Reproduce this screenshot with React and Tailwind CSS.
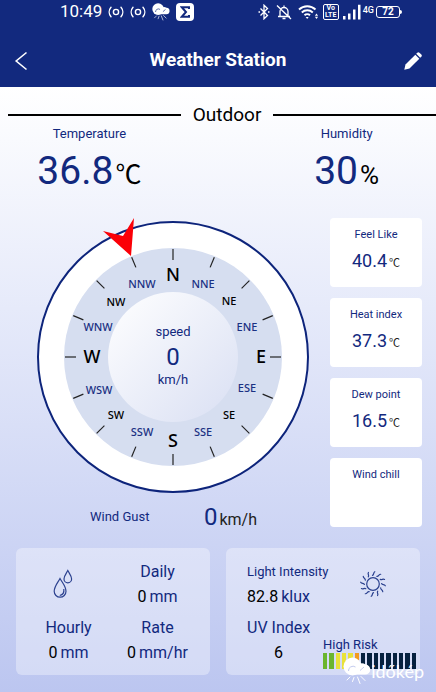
const directions = [
  { label: "N", x: 0, y: -82, kind: "main" },
  { label: "NNE", x: 30, y: -73, kind: "minor" },
  { label: "NE", x: 56, y: -56, kind: "mid" },
  { label: "ENE", x: 74, y: -30, kind: "minor" },
  { label: "E", x: 88, y: 0, kind: "main" },
  { label: "ESE", x: 74, y: 31, kind: "minor" },
  { label: "SE", x: 56, y: 58, kind: "mid" },
  { label: "SSE", x: 30, y: 75, kind: "minor" },
  { label: "S", x: 0, y: 84, kind: "main" },
  { label: "SSW", x: -31, y: 75, kind: "minor" },
  { label: "SW", x: -57, y: 58, kind: "mid" },
  { label: "WSW", x: -74, y: 33, kind: "minor" },
  { label: "W", x: -81, y: 0, kind: "main" },
  { label: "WNW", x: -75, y: -30, kind: "minor" },
  { label: "NW", x: -57, y: -55, kind: "mid" },
  { label: "NNW", x: -31, y: -73, kind: "minor" },
];

const labelStyles = {
  main: "fill-black text-[18px] font-medium",
  mid: "fill-black text-[11px] font-medium",
  minor: "fill-[#1b3183] text-[11px] font-medium",
};

const feelCards = [
  { title: "Feel Like", value: "40.4" },
  { title: "Heat index", value: "37.3" },
  { title: "Dew point", value: "16.5" },
  { title: "Wind chill", value: null },
];

const uvBars = [
  "bg-[#6ab52e]",
  "bg-[#6ab52e]",
  "bg-[#e9e23a]",
  "bg-[#e9e23a]",
  "bg-[#e9e23a]",
  "bg-[#f39a1e]",
  ...Array(9).fill("bg-[#06213f]"),
];

const CastIcon = () => (
  <svg viewBox="0 0 16 12" className="h-3 w-4" fill="none" stroke="white" strokeWidth="1.4">
    <circle cx="8" cy="6" r="2.6" />
    <path d="M3 1.2C.6 4 .6 8 3 10.8M13 1.2c2.4 2.8 2.4 6.8 0 9.6" strokeLinecap="round" />
  </svg>
);

const CloudSun = ({ className, line = "#c3cbee" }) => (
  <svg viewBox="0 0 28 28" className={className}>
    <circle cx="9.5" cy="9.5" r="9" fill="white" />
    <path
      d="M10 17.5h12a5 5 0 0 0 .6-10 6.500 6.500 0 0 0-10 3A3.800 3.800 0 0 0 10 17.500z"
      fill="white"
    />
    <path d="M5.500 14a4.500 4.500 0 0 1 7-4M17 13.500l4-3.500" stroke={line} strokeWidth="1" fill="none" />
    <path
      d="M7 20l-3 3M11 20.500l-1.500 4M14.500 20l2.500 6.500M18 19.500l4 4"
      stroke="white"
      strokeWidth="1"
      strokeLinecap="round"
    />
  </svg>
);

const StatusBar = () => (
  <div className="flex h-6 items-center justify-between pr-[34px] pl-[60px] text-white">
    <div className="flex items-center gap-1.5">
      <span className="text-[17px]">10:49</span>
      <CastIcon />
      <CastIcon />
      <CloudSun className="h-[18px] w-[18px]" line="#12297e" />
      <span className="flex h-[18px] w-[18px] items-center justify-center rounded-[4px] bg-white">
        <svg viewBox="0 0 10 12" className="h-3 w-2.5" fill="none" stroke="#12297e" strokeWidth="2">
          <path d="M9 3V1.200H1.800L6 6l-4.200 4.800H9V9" />
        </svg>
      </span>
    </div>
    <div className="flex items-center">
      <svg viewBox="0 0 12 16" className="h-4 w-3" fill="none" stroke="white" strokeWidth="1.300">
        <path d="M2.500 4.500l7 7L6 14.800V1.200l3.500 3.300-7 7M.5 8h1.500M10 8h1.500" />
      </svg>
      <svg viewBox="0 0 16 16" className="ml-1.5 h-4 w-4" fill="none" stroke="white" strokeWidth="1.300">
        <path d="M2 12.500h12M4 12.500V7.500a4 4 0 0 1 8 0v5M8 3.200V1.500M6.500 14.500h3M1 1.500l14 13.500" />
      </svg>
      <svg viewBox="0 0 21 16" className="ml-1.5 h-4 w-[21px]" fill="none" stroke="white" strokeWidth="1.900">
        <path d="M1 5.500a12 12 0 0 1 16.500 0M3.800 8.500a8 8 0 0 1 11 0M6.500 11.300a4 4 0 0 1 5.500 0" />
        <path d="M9.200 15l-1.500-2h3z" fill="white" stroke="none" />
        <path d="M18.500 9.500l1.600 2.200h-3.200zM18.500 15l1.600-2.200h-3.200z" fill="white" stroke="none" />
      </svg>
      <span className="ml-1 flex h-4 w-4 flex-col items-center justify-center rounded-[2px] border border-white text-[7px] leading-[7px] font-bold">
        <span>Vo</span>
        <span>LTE</span>
      </span>
      <svg viewBox="0 0 18 16" className="ml-1 h-4 w-[18px]" fill="white">
        <path d="M0 12h2.500v3.500H0zM5 9.500h2.500v6H5zM10 5.500h2.500v10H10zM15 .8h2.500v14.700H15z" />
      </svg>
      <span className="ml-0.5 self-start text-[9px] leading-[13px] font-medium">4G</span>
      <span className="ml-0.5 flex h-3 w-6 items-center justify-center rounded-[3px] border border-white text-[10px] leading-[10px] font-bold">
        72
      </span>
      <span className="h-1 w-0.5 rounded-r-sm bg-white" />
    </div>
  </div>
);

const Header = () => (
  <header className="bg-[#12297e]">
    <StatusBar />
    <div className="grid h-[63px] grid-cols-[1fr_auto_1fr] items-center px-3.5 pt-2.5 text-white">
      <button aria-label="Back" className="w-4">
        <svg viewBox="0 0 14 20" className="h-5 w-3.5" fill="none" stroke="white" strokeWidth="1.600">
          <path d="M12.500 1.500L2.200 10l10.300 8.500" />
        </svg>
      </button>
      <h1 className="text-[19px] font-bold">Weather Station</h1>
      <button aria-label="Edit" className="justify-self-end">
        <svg viewBox="0 0 18 18" className="h-[18px] w-[18px]" fill="white">
          <path d="M.3 17.700l1.200-5.200L11.300 2.700l4 4L5.500 16.500z" />
          <path d="M12.200 1.800l1.100-1.100a1.500 1.500 0 0 1 2.100 0l1.900 1.900a1.500 1.500 0 0 1 0 2.100l-1.100 1.100z" />
        </svg>
      </button>
    </div>
  </header>
);

const Reading = ({ title, value, unit }) => (
  <div className="flex w-[41%] flex-col items-center">
    <h3 className="text-[13px] leading-[14px]">{title}</h3>
    <p className="mt-1 flex items-baseline text-[39px] leading-[52px]">
      {value}
      <span className="ml-0.5 text-[26px] leading-none text-black">{unit}</span>
    </p>
  </div>
);

const Compass = () => (
  <svg viewBox="-136 -136 272 272" className="w-full overflow-visible">
    <defs>
      <linearGradient id="dial" x1="0" y1="0" x2="1" y2="1">
        <stop offset="0" stopColor="#ffffff" />
        <stop offset="1" stopColor="#d9dff3" />
      </linearGradient>
    </defs>
    <circle r="135" fill="white" stroke="#0d247b" strokeWidth="2" />
    <circle r="109" fill="#d6def0" />
    <circle r="65" fill="url(#dial)" />
    {directions.map(({ label, x, y, kind }, i) => (
      <g key={label}>
        <line y1="-108" y2="-97" stroke="#222" strokeWidth="1.200" transform={`rotate(${i * 22.5})`} />
        <text
          x={x}
          y={y}
          textAnchor="middle"
          dy="0.36em"
          className={`font-['Noto_Sans',sans-serif] ${labelStyles[kind]}`}
        >
          {label}
        </text>
      </g>
    ))}
    <g textAnchor="middle" className="fill-[#12297e]">
      <text y="-21" className="text-[13px]">speed</text>
      <text y="8" className="text-[24px]">0</text>
      <text y="27" className="text-[13px]">km/h</text>
    </g>
    <path d="M-42-101L-70-126l20 5 11-18z" fill="#fb0007" />
  </svg>
);

const FeelCard = ({ title, value }) => (
  <div className="h-[69px] rounded-[4px] bg-white pt-2 text-center">
    <h3 className="text-[11px] leading-[18px]">{title}</h3>
    {value && (
      <p className="mt-1 flex items-baseline justify-center text-[18px] leading-[26px]">
        {value}
        <span className="ml-0.5 text-[11px] leading-none text-[#222]">℃</span>
      </p>
    )}
  </div>
);

const RainItem = ({ title, unit }) => (
  <div className="text-center text-[16px] leading-[25px]">
    <h3>{title}</h3>
    <p className="flex justify-center gap-[3px]">
      <span className="text-black">0</span>
      <span>{unit}</span>
    </p>
  </div>
);

const RainCard = () => (
  <section className="grid grid-cols-2 content-start gap-y-1.5 rounded-[6px] bg-white/35 px-2 pt-[11px] pb-2.5">
    <div className="flex items-center justify-center pr-3">
      <svg viewBox="0 0 20 30" className="h-[30px] w-5" fill="none" stroke="#2b418f" strokeWidth="1.200">
        <path d="M7 9.500C4.500 14 1.200 17.500 1.200 22.300a5.900 5.900 0 0 0 11.800 0C13 17.500 9.500 14 7 9.500z" />
        <path d="M14.800 1.500C13.300 4.500 11 6.800 11 10a3.800 3.800 0 0 0 7.600 0c0-3.200-2.300-5.500-3.800-8.500z" />
        <path d="M10.800 20c.5 3.500-1 5.800-4 6.500" />
      </svg>
    </div>
    <RainItem title="Daily" unit="mm" />
    <RainItem title="Hourly" unit="mm" />
    <RainItem title="Rate" unit="mm/hr" />
  </section>
);

const SunIcon = () => (
  <svg viewBox="-13 -13 26 26" className="h-[26px] w-[26px]" fill="none" stroke="#2b418f" strokeWidth="1.200">
    <circle r="6.300" />
    {Array.from({ length: 12 }, (_, i) => (
      <path
        key={i}
        d="M-.5-8.600c1.900-.7.4-2.700 2.300-3.700"
        strokeLinecap="round"
        transform={`rotate(${i * 30})`}
      />
    ))}
  </svg>
);

const LightCard = () => (
  <section className="relative flex justify-between rounded-[6px] bg-white/35 pt-[11px] pr-1 pb-2.5 pl-[21px] text-[16px] leading-[25px]">
    <div className="flex w-0 flex-1 flex-col items-start whitespace-nowrap">
      <h3 className="text-[13px] leading-[25px]">Light Intensity</h3>
      <p className="flex gap-[3px]">
        <span className="text-black">82.8</span>
        <span>klux</span>
      </p>
      <div className="mt-1.5 text-center">
        <h3>UV Index</h3>
        <p className="text-black">6</p>
      </div>
    </div>
    <div className="flex w-[93px] shrink-0 flex-col justify-between pt-3">
      <div className="ml-[37px]">
        <SunIcon />
      </div>
      <div className="-mb-1">
        <p className="text-[13px] leading-4">High Risk</p>
        <div className="flex h-4 gap-0.5">
          {uvBars.map((color, i) => (
            <span key={i} className={`flex-1 ${color}`} />
          ))}
        </div>
      </div>
    </div>
    <div className="absolute -right-1 -bottom-2.5 flex items-center text-white">
      <CloudSun className="h-7 w-7" />
      <span className="font-['Lato',sans-serif] text-[18px] leading-6">időkép</span>
    </div>
  </section>
);

export default function App() {
  return (
    <div className="flex min-h-screen flex-col bg-[#bcc6f0] font-['Roboto','Noto_Sans_CJK_SC',sans-serif] text-[#12297e]">
      <Header />
      <main className="flex-1 bg-linear-to-b from-white to-[#bcc6f0] pt-4 pb-4">
        <div className="flex items-center gap-3 pl-2">
          <span className="h-0.5 flex-1 bg-black" />
          <h2 className="text-[19px] leading-6 text-black">Outdoor</h2>
          <span className="h-0.5 w-[38%] bg-black" />
        </div>
        <div className="flex justify-between">
          <Reading title="Temperature" value="36.8" unit="℃" />
          <Reading title="Humidity" value="30" unit="%" />
        </div>
        <div className="mt-[21px] flex gap-[21px] pr-3.5 pl-[37px]">
          <div className="flex-1 pt-[3px]">
            <Compass />
            <div className="mt-2 flex items-center justify-between pr-[52px] pl-[53px]">
              <h3 className="text-[13px]">Wind Gust</h3>
              <p className="flex items-baseline text-[24px] leading-8">
                0<span className="ml-0.5 text-[16px] leading-none text-[#222]">km/h</span>
              </p>
            </div>
          </div>
          <div className="flex w-[92px] flex-col gap-[11px]">
            {feelCards.map((card) => (
              <FeelCard key={card.title} {...card} />
            ))}
          </div>
        </div>
        <div className="mt-[15px] grid grid-cols-2 gap-4 px-4">
          <RainCard />
          <LightCard />
        </div>
      </main>
    </div>
  );
}
